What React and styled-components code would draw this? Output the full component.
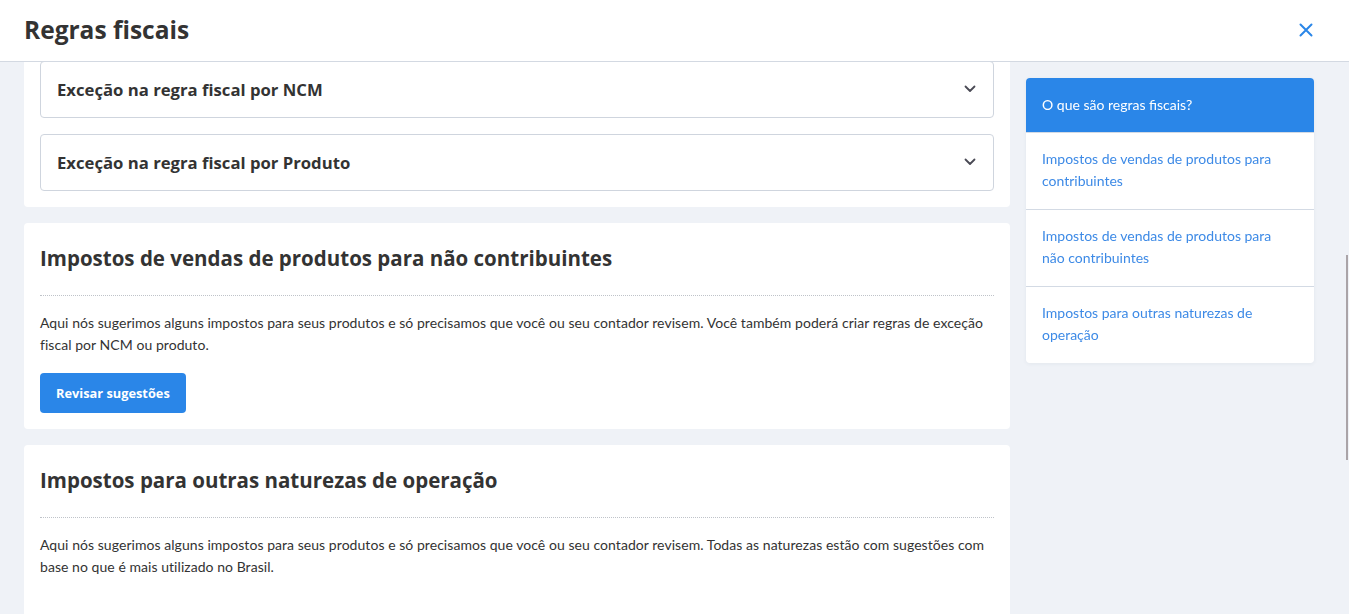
import React, { useEffect, useRef } from 'react'
import styled, { createGlobalStyle } from 'styled-components'

const GlobalStyle = createGlobalStyle`
  * { box-sizing: border-box; }
  html, body { margin: 0; padding: 0; height: 100%; }
  body {
    font-family: Lato, "Noto Sans", sans-serif;
    color: #333;
    background: #eff2f7;
    overflow: hidden;
  }
`

const headingFont = `"Open Sans", Lato, sans-serif`

const cards = [
  {
    title: 'Impostos de vendas de produtos para contribuintes',
    text: 'Aqui nós sugerimos alguns impostos para seus produtos e só precisamos que você ou seu contador revisem. Você também poderá criar regras de exceção fiscal por NCM ou produto.',
    accordions: ['Exceção na regra fiscal por NCM', 'Exceção na regra fiscal por Produto'],
  },
  {
    title: 'Impostos de vendas de produtos para não contribuintes',
    text: 'Aqui nós sugerimos alguns impostos para seus produtos e só precisamos que você ou seu contador revisem. Você também poderá criar regras de exceção fiscal por NCM ou produto.',
    button: true,
  },
  {
    title: 'Impostos para outras naturezas de operação',
    text: 'Aqui nós sugerimos alguns impostos para seus produtos e só precisamos que você ou seu contador revisem. Todas as naturezas estão com sugestões com base no que é mais utilizado no Brasil.',
    spacer: true,
  },
]

const links = [
  'Impostos de vendas de produtos para contribuintes',
  'Impostos de vendas de produtos para não contribuintes',
  'Impostos para outras naturezas de operação',
]

function Chevron() {
  return (
    <svg width="12" height="8" viewBox="0 0 12 8" fill="none">
      <path d="M1.5 1.5 L6 6 L10.5 1.5" stroke="#4a4a55" strokeWidth="1.8" strokeLinecap="round" strokeLinejoin="round" />
    </svg>
  )
}

function CloseIcon() {
  return (
    <svg width="14" height="14" viewBox="0 0 14 14" fill="none">
      <path d="M1.5 1.5 L12.5 12.5 M12.5 1.5 L1.5 12.5" stroke="#2a86e8" strokeWidth="2" strokeLinecap="round" />
    </svg>
  )
}

export default function App() {
  const scrollRef = useRef(null)
  const firstCardRef = useRef(null)

  useEffect(() => {
    const el = scrollRef.current
    const card = firstCardRef.current
    if (el && card) {
      // in the picture the first card is scrolled so that it ends at y = 207
      el.scrollTop += card.getBoundingClientRect().bottom - 207
    }
  }, [])

  return (
    <>
      <GlobalStyle />
      <Page>
        <Header>
          <Title>Regras fiscais</Title>
          <CloseButton aria-label="Fechar"><CloseIcon /></CloseButton>
        </Header>
        <Scroll ref={scrollRef}>
          <Layout>
            <Main>
              {cards.map((c, i) => (
                <Card key={c.title} ref={i === 0 ? firstCardRef : null}>
                  <CardHeader>
                    <CardTitle>{c.title}</CardTitle>
                  </CardHeader>
                  <CardBody>
                    <Text>{c.text}</Text>
                    {c.accordions ? (
                      <>
                        <PrimaryButton>Revisar sugestões</PrimaryButton>
                        <Accordions>
                          {c.accordions.map((a) => (
                            <Accordion key={a}>
                              <AccordionTitle>{a}</AccordionTitle>
                              <Chevron />
                            </Accordion>
                          ))}
                        </Accordions>
                      </>
                    ) : null}
                    {c.button && <PrimaryButton>Revisar sugestões</PrimaryButton>}
                    {c.spacer && <Spacer />}
                  </CardBody>
                </Card>
              ))}
            </Main>
            <Side>
              <SideCard>
                <SideHeader>O que são regras fiscais?</SideHeader>
                {links.map((l) => (
                  <SideLink key={l}>{l}</SideLink>
                ))}
              </SideCard>
            </Side>
          </Layout>
        </Scroll>
        <ScrollThumb />
      </Page>
    </>
  )
}

const Page = styled.div`
  position: relative;
  height: 100vh;
  display: flex;
  flex-direction: column;
`

const Header = styled.header`
  height: 62px;
  flex-shrink: 0;
  background: #fff;
  border-bottom: 1px solid #d3d9e2;
  display: flex;
  align-items: center;
  justify-content: space-between;
  padding: 0 36px 2px 24px;
`

const Title = styled.h1`
  margin: 0;
  font-family: ${headingFont};
  font-size: 24.5px;
  font-weight: 700;
  color: #333;
`

const CloseButton = styled.button`
  border: none;
  background: none;
  padding: 0;
  display: flex;
  cursor: pointer;
`

const Scroll = styled.div`
  position: relative;
  flex: 1;
  overflow-y: auto;
  scrollbar-width: none;
  &::-webkit-scrollbar { display: none; }
`

/* thin overlay scrollbar thumb seen at the right edge */
const ScrollThumb = styled.div`
  position: absolute;
  right: 1px;
  top: 255px;
  width: 2px;
  height: 205px;
  background: #aaa4a8;
`

const Layout = styled.div`
  display: grid;
  grid-template-columns: 1fr 288px;
  gap: 16px;
  align-items: start;
  padding: 16px 35px 40px 24px;
`

const Main = styled.div`
  display: flex;
  flex-direction: column;
  gap: 16px;
`

const Card = styled.section`
  background: #fff;
  border-radius: 4px;
  padding: 16px;
`

const CardHeader = styled.div`
  padding-bottom: 18px;
  border-bottom: 1px dotted #bfc3c9;
`

const CardTitle = styled.h2`
  margin: 0;
  font-family: ${headingFont};
  font-size: 20.5px;
  line-height: 38px;
  font-weight: 700;
  color: #333;
`

const CardBody = styled.div`
  padding-top: 16px;
  display: flex;
  flex-direction: column;
  align-items: flex-start;
  gap: 17px;
`

const Text = styled.p`
  margin: 0;
  font-size: 14px;
  line-height: 22px;
  letter-spacing: 0.05px;
  color: #333;
`

const PrimaryButton = styled.button`
  height: 40px;
  padding: 0 16px;
  border: none;
  border-radius: 4px;
  background: #2a86e8;
  color: #fff;
  font-family: ${headingFont};
  font-size: 12.8px;
  font-weight: 700;
  cursor: pointer;
`

const Spacer = styled.div`
  height: 40px;
`

const Accordions = styled.div`
  align-self: stretch;
  display: flex;
  flex-direction: column;
  gap: 16px;
`

const Accordion = styled.div`
  height: 57px;
  border: 1px solid #cfd5de;
  border-radius: 4px;
  display: flex;
  align-items: center;
  justify-content: space-between;
  padding: 0 17px 1px 16px;
`

const AccordionTitle = styled.span`
  font-family: ${headingFont};
  font-size: 16.7px;
  font-weight: 700;
  color: #333;
`

const Side = styled.aside`
  position: sticky;
  top: 16px;
`

const SideCard = styled.nav`
  background: #fff;
  border-radius: 4px;
  overflow: hidden;
  box-shadow: 0 1px 4px rgba(40, 60, 90, 0.06);
`

const SideHeader = styled.div`
  background: #2a86e8;
  color: #fff;
  font-size: 14px;
  line-height: 22px;
  padding: 16px;
  height: 54px;
`

const SideLink = styled.a`
  display: block;
  border-top: 1px solid #d3dae4;
  padding: 15px 24px 17px 16px;
  font-size: 14px;
  line-height: 22px;
  color: #3d8ae6;
  cursor: pointer;
`
